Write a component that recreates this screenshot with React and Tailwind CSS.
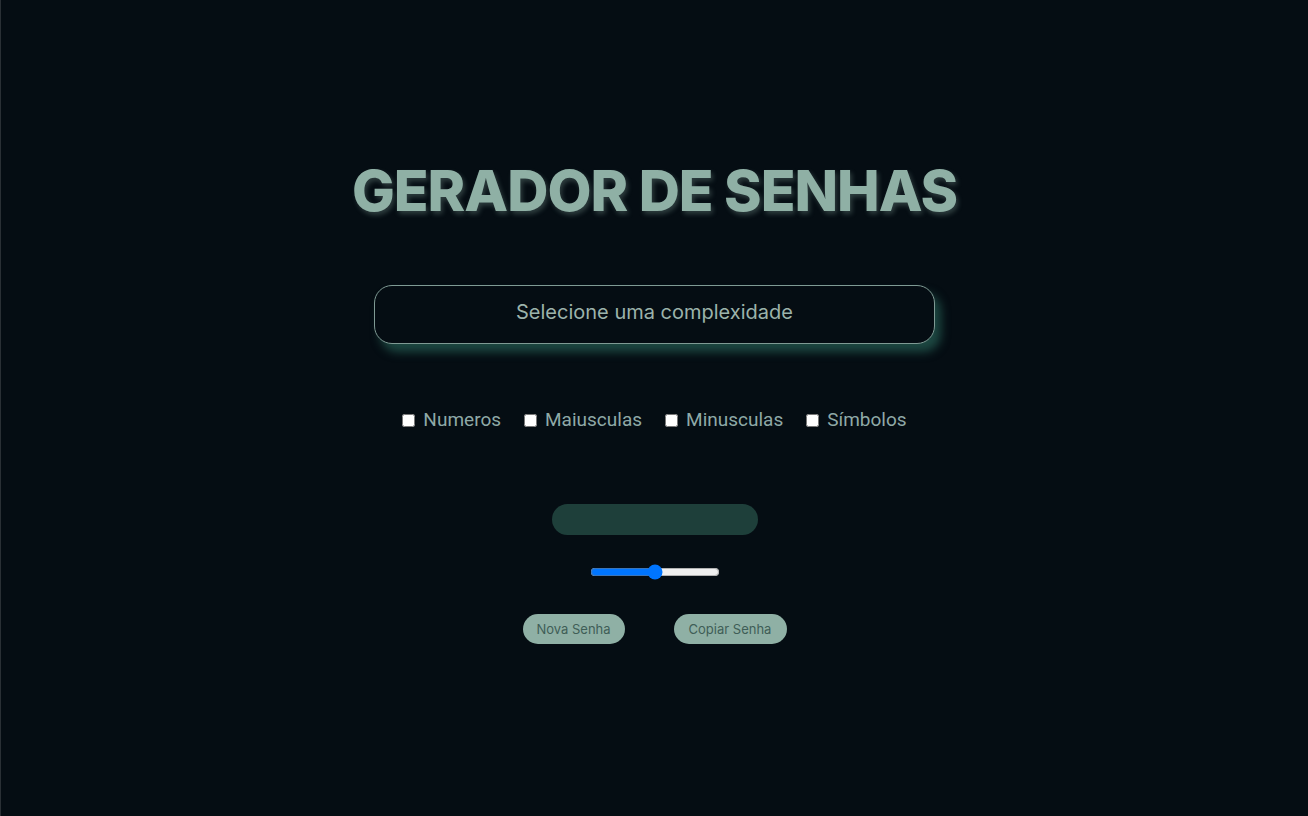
export default function App() {
  return (
    <div className="min-h-[816px] w-full bg-[#050d13] border-l border-[#2a3035] flex flex-col items-center [font-family:Inter,'Liberation_Sans',sans-serif]">
      <h1 className="mt-[160px] text-[57px] leading-[62px] font-extrabold tracking-[-1px] text-[#8fb0a5] [text-shadow:2px_3px_5px_rgba(143,176,165,0.3)]">
        GERADOR DE SENHAS
      </h1>
      <div className="mt-[63px] w-[561px] h-[59px] rounded-[18px] border border-[#7f9a94] bg-[#050d13] shadow-[6px_8px_10px_#1d4842] flex items-center justify-center pb-[6px]">
        <span className="text-[20px] text-[#9cb3ab]">Selecione uma complexidade</span>
      </div>
      <div className="mt-[62px] flex items-center gap-[23px] text-[19px] text-[#8fa9a7] [font-family:Roboto,'Liberation_Sans',sans-serif]">
        {["Numeros", "Maiusculas", "Minusculas", "Símbolos"].map((l) => (
          <label key={l} className="flex items-center gap-[8px]">
            <input type="checkbox" className="w-[13px] h-[13px] m-0" />
            <span>{l}</span>
          </label>
        ))}
      </div>
      <div className="mt-[69px] w-[206px] h-[31px] rounded-full bg-[#1e3f3a]" />
      <input type="range" min="0" max="100" defaultValue="50" className="mt-[29px] w-[130px]" />
      <div className="mt-[34px] flex items-center gap-[49px] [font-family:Inter,'Liberation_Sans',sans-serif]">
        <button className="h-[30px] w-[102px] rounded-full bg-[#8fb0a5] text-[13px] text-[#3f5e57] pt-[3px]">Nova Senha</button>
        <button className="h-[30px] w-[113px] rounded-full bg-[#8fb0a5] text-[13px] text-[#3f5e57] pt-[3px]">Copiar Senha</button>
      </div>
    </div>
  );
}
